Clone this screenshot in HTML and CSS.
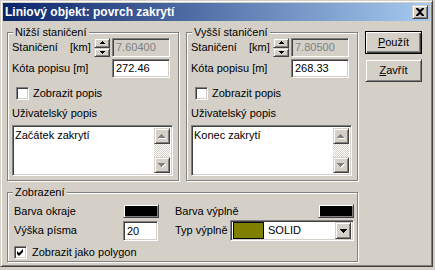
FILE: index.html
```html
<!DOCTYPE html>
<html lang="cs">
<head>
    <meta charset="UTF-8" />
    <title>Liniový objekt: povrch zakrytí</title>
    <link rel="stylesheet" href="styles.css">
</head>
<body>

<div class="window">
    <!-- Title bar -->
    <div class="titlebar">
        <span class="title">Liniový objekt: povrch zakrytí</span>
        <div class="close-btn raised">
            <svg width="14" height="12" viewBox="0 0 14 12">
                <path d="M3 2h2l2 2 2-2h2v1l-3 3 3 3v1H9L7 8 5 10H3V9l3-3-3-3z" fill="#000"/>
            </svg>
        </div>
    </div>

    <div class="body">
        <div class="main">
            <div class="top-groups">

                <!-- Lower station -->
                <div class="group station">
                    <span class="group-title">Nižší staničení</span>
                    <div class="row">
                        <span class="lbl-a">Staničení</span>
                        <span class="lbl-b">[km]</span>
                        <div class="spinner">
                            <div class="spin-btn raised">
                                <svg width="5" height="3"><path d="M2 0h1v1h1v1h1v1H0V2h1V1h1z"/></svg>
                            </div>
                            <div class="spin-btn raised">
                                <svg width="5" height="3"><path d="M0 0h5v1H4v1H3v1H2V2H1V1H0z"/></svg>
                            </div>
                        </div>
                        <div class="field sunken disabled">7.60400</div>
                    </div>
                    <div class="row">
                        <span class="lbl">Kóta popisu [m]</span>
                        <div class="field sunken">272.46</div>
                    </div>
                    <div class="check-row">
                        <span class="checkbox sunken"></span>
                        <span>Zobrazit popis</span>
                    </div>
                    <div class="caption">Uživatelský popis</div>
                    <div class="memo sunken">
                        <div class="memo-text">Začátek zakrytí</div>
                        <div class="vscroll">
                            <div class="scroll-btn raised">
                                <svg width="8" height="5"><path fill="#fff" d="M4 1h1v1h1v1h1v1h1v1H1V4h1V3h1V2h1z"/><path fill="#808080" d="M3 0h1v1h1v1h1v1h1v1H0V3h1V2h1V1h1z"/></svg>
                            </div>
                            <div class="track"></div>
                            <div class="scroll-btn raised">
                                <svg width="8" height="5"><path fill="#fff" d="M1 1h7v1H7v1H6v1H5v1H4V4H3V3H2V2H1z"/><path fill="#808080" d="M0 0h7v1H6v1H5v1H4v1H3V3H2V2H1V1H0z"/></svg>
                            </div>
                        </div>
                    </div>
                </div>

                <!-- Upper station -->
                <div class="group station">
                    <span class="group-title">Vyšší staničení</span>
                    <div class="row">
                        <span class="lbl-a">Staničení</span>
                        <span class="lbl-b">[km]</span>
                        <div class="spinner">
                            <div class="spin-btn raised">
                                <svg width="5" height="3"><path d="M2 0h1v1h1v1h1v1H0V2h1V1h1z"/></svg>
                            </div>
                            <div class="spin-btn raised">
                                <svg width="5" height="3"><path d="M0 0h5v1H4v1H3v1H2V2H1V1H0z"/></svg>
                            </div>
                        </div>
                        <div class="field sunken disabled">7.80500</div>
                    </div>
                    <div class="row">
                        <span class="lbl">Kóta popisu [m]</span>
                        <div class="field sunken">268.33</div>
                    </div>
                    <div class="check-row">
                        <span class="checkbox sunken"></span>
                        <span>Zobrazit popis</span>
                    </div>
                    <div class="caption">Uživatelský popis</div>
                    <div class="memo sunken">
                        <div class="memo-text">Konec zakrytí</div>
                        <div class="vscroll">
                            <div class="scroll-btn raised">
                                <svg width="8" height="5"><path fill="#fff" d="M4 1h1v1h1v1h1v1h1v1H1V4h1V3h1V2h1z"/><path fill="#808080" d="M3 0h1v1h1v1h1v1h1v1H0V3h1V2h1V1h1z"/></svg>
                            </div>
                            <div class="track"></div>
                            <div class="scroll-btn raised">
                                <svg width="8" height="5"><path fill="#fff" d="M1 1h7v1H7v1H6v1H5v1H4V4H3V3H2V2H1z"/><path fill="#808080" d="M0 0h7v1H6v1H5v1H4v1H3V3H2V2H1V1H0z"/></svg>
                            </div>
                        </div>
                    </div>
                </div>
            </div>

            <!-- Display settings -->
            <div class="group display">
                <span class="group-title">Zobrazení</span>
                <div class="disp-row">
                    <div class="cell-left">
                        <span class="disp-lbl">Barva okraje</span>
                        <div class="color-btn raised"></div>
                    </div>
                    <div class="cell-right">
                        <span>Barva výplně</span>
                        <div class="color-btn raised"></div>
                    </div>
                </div>
                <div class="disp-row tall">
                    <div class="cell-left">
                        <span class="disp-lbl">Výška písma</span>
                        <div class="small-field sunken">20</div>
                    </div>
                    <div class="cell-right">
                        <span>Typ výplně</span>
                        <div class="combo sunken">
                            <span class="swatch"></span>
                            <span class="combo-text">SOLID</span>
                            <div class="combo-btn raised">
                                <svg width="7" height="4"><path d="M0 0h7v1H6v1H5v1H4v1H3V3H2V2H1V1H0z"/></svg>
                            </div>
                        </div>
                    </div>
                </div>
                <div class="check-row polygon">
                    <span class="checkbox sunken">
                        <svg width="7" height="7"><path d="M0 2L2 4L6 0V3L2 7L0 5Z"/></svg>
                    </span>
                    <span>Zobrazit jako polygon</span>
                </div>
            </div>
        </div>

        <!-- Buttons -->
        <div class="buttons">
            <div class="btn default"><span><u>P</u>oužít</span></div>
            <div class="btn raised"><span><u>Z</u>avřít</span></div>
        </div>
    </div>
</div>

</body>
</html>
```

FILE: styles.css
```css
body {
    margin: 0;
    background-color: #d4d0c8;
    font-family: "Liberation Sans", Arial, sans-serif;
    font-size: 11px;
    line-height: 13px;
    color: #000;
}

.window {
    width: 433px;
    height: 267px;
    box-sizing: border-box;
    border: 1px solid;
    border-color: #d4d0c8 #404040 #404040 #d4d0c8;
    box-shadow: inset 1px 1px #fff, inset -1px -1px #808080;
    padding: 2px;
    background-color: #d4d0c8;
}

/* 3D borders */
.raised {
    box-sizing: border-box;
    border: 1px solid;
    border-color: #d4d0c8 #404040 #404040 #d4d0c8;
    box-shadow: inset 1px 1px #fff, inset -1px -1px #808080;
    background-color: #d4d0c8;
}

.sunken {
    box-sizing: border-box;
    border: 1px solid;
    border-color: #808080 #fff #fff #808080;
    box-shadow: inset 1px 1px #404040, inset -1px -1px #d4d0c8;
    background-color: #fff;
}

/* Title bar */
.titlebar {
    height: 18px;
    display: flex;
    align-items: center;
    justify-content: space-between;
    padding: 0 2px;
    background: linear-gradient(to right, #0a246a, #a6caf0);
}

.title {
    color: #fff;
    font-weight: bold;
    font-size: 12px;
}

.close-btn {
    width: 16px;
    height: 14px;
    display: flex;
    align-items: center;
    justify-content: center;
}

/* Layout */
.body {
    display: flex;
    padding: 11px 0 0 4px;
}

.main {
    width: 351px;
}

.top-groups {
    display: flex;
    gap: 7px;
}

.group {
    position: relative;
    box-sizing: border-box;
    border: 1px solid #808080;
    box-shadow: inset 1px 1px #fff, 1px 1px #fff;
}

.group-title {
    position: absolute;
    top: -7px;
    left: 5px;
    padding: 0 2px;
    background-color: #d4d0c8;
}

.station {
    width: 172px;
    height: 149px;
    padding: 5px 0 0 4px;
}

.row {
    display: flex;
    align-items: center;
    height: 19px;
    margin-bottom: 2px;
}

.lbl-a { width: 58px; }
.lbl-b { width: 24px; }
.lbl { width: 100px; }

.spinner {
    width: 16px;
    height: 19px;
    display: flex;
    flex-direction: column;
    margin-right: 2px;
}

.spin-btn {
    flex: 1;
    display: flex;
    align-items: center;
    justify-content: center;
}

.field {
    width: 58px;
    height: 19px;
    padding: 2px 0 0 3px;
}

.field.disabled {
    background-color: #d4d0c8;
    color: #808080;
}

.check-row {
    display: flex;
    align-items: center;
    height: 13px;
    margin: 9px 0 0 4px;
}

.checkbox {
    width: 13px;
    height: 13px;
    margin-right: 4px;
    display: flex;
    align-items: center;
    justify-content: center;
}

.caption {
    margin-top: 7px;
}

.memo {
    display: flex;
    width: 161px;
    height: 51px;
    margin-top: 5px;
    padding: 2px;
}

.memo-text {
    flex: 1;
    padding-top: 1px;
}

.vscroll {
    width: 16px;
    display: flex;
    flex-direction: column;
}

.scroll-btn {
    height: 16px;
    display: flex;
    align-items: center;
    justify-content: center;
}

.track {
    flex: 1;
    background: repeating-conic-gradient(#fff 0 25%, #d4d0c8 0 50%) 0 0 / 2px 2px;
}

/* Display group */
.display {
    margin-top: 11px;
    width: 351px;
    height: 70px;
    padding: 11px 0 0 6px;
}

.disp-row {
    display: flex;
    align-items: center;
    height: 14px;
}

.disp-row.tall {
    height: 21px;
    margin-top: 2px;
}

.cell-left {
    width: 161px;
    display: flex;
    align-items: center;
}

.disp-lbl { width: 109px; }

.cell-right {
    width: 179px;
    display: flex;
    align-items: center;
    justify-content: space-between;
}

.color-btn {
    width: 36px;
    height: 14px;
    background-color: #000;
}

.small-field {
    width: 35px;
    height: 20px;
    padding: 3px 0 0 3px;
}

.combo {
    width: 124px;
    height: 21px;
    display: flex;
    align-items: center;
    padding: 2px;
}

.swatch {
    width: 31px;
    height: 17px;
    box-sizing: border-box;
    border: 1px solid #000;
    background-color: #808000;
    margin-right: 4px;
}

.combo-text {
    flex: 1;
}

.combo-btn {
    width: 16px;
    height: 17px;
    display: flex;
    align-items: center;
    justify-content: center;
}

.check-row.polygon {
    margin: 5px 0 0 0;
}

.check-row.polygon .checkbox {
    margin-right: 5px;
}

/* Buttons */
.buttons {
    margin: -1px 0 0 7px;
    display: flex;
    flex-direction: column;
    gap: 5px;
}

.btn {
    width: 57px;
    height: 23px;
    display: flex;
    align-items: center;
    justify-content: center;
}

.btn.default {
    box-sizing: border-box;
    border: 1px solid #000;
    box-shadow: inset 1px 1px #fff, inset -1px -1px #404040, inset -2px -2px #808080;
}
```
